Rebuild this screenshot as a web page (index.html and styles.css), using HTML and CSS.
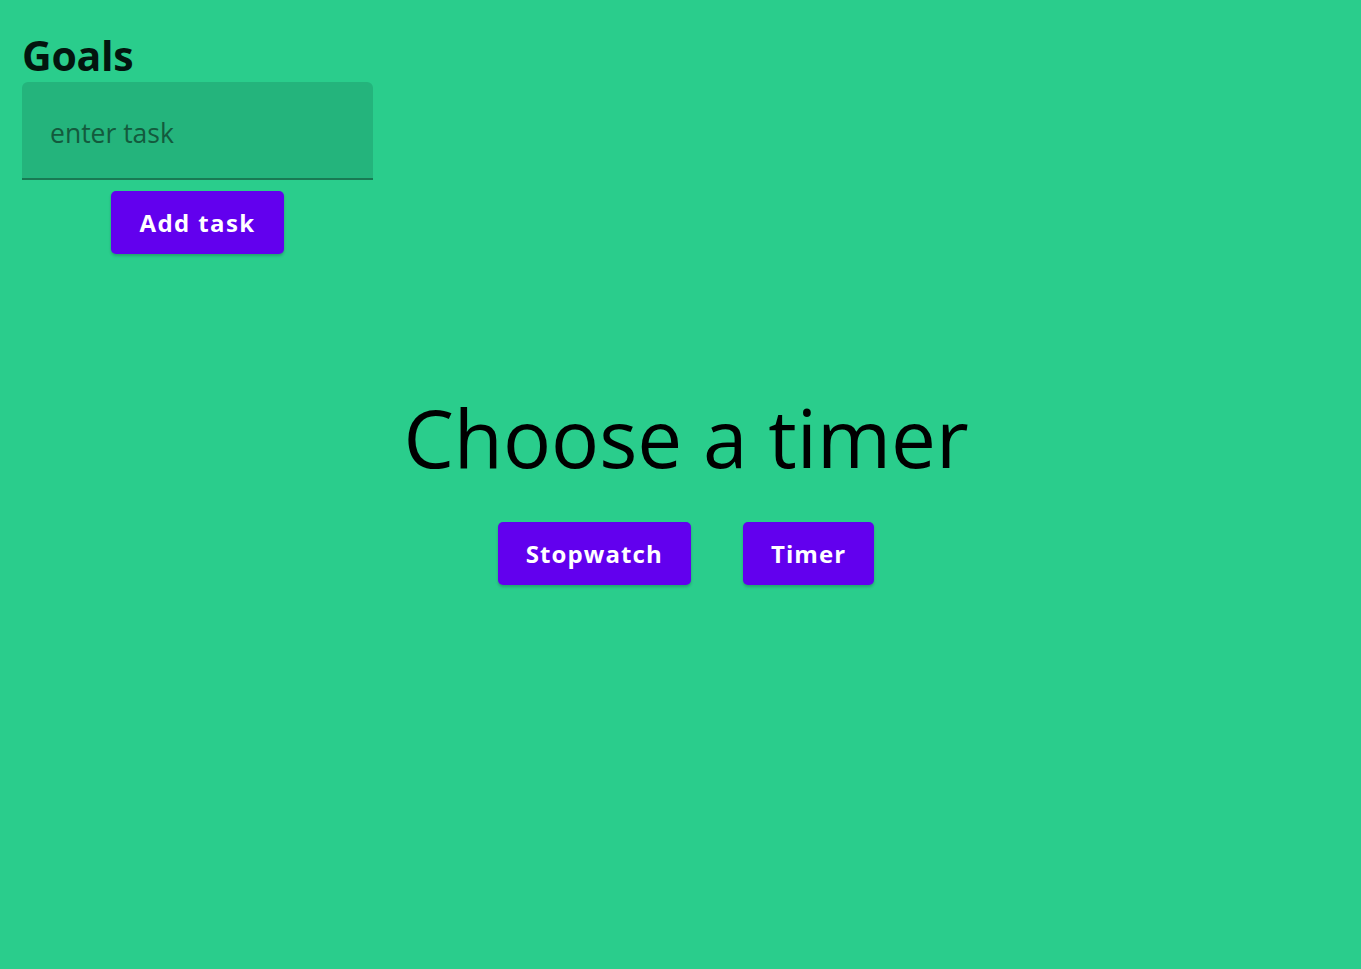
FILE: index.html
```html
<!DOCTYPE html>
<html lang="en">
<head>
<meta charset="utf-8">
<title>Goals</title>
<link rel="stylesheet" href="styles.css">
</head>
<body>
<div class="app">
  <section class="goals">
    <h2 class="goals-title">Goals</h2>
    <label class="field">
      <input class="field-input" type="text" placeholder="enter task">
    </label>
    <button class="btn btn-add">Add task</button>
  </section>
  <main class="timers">
    <h1 class="timers-title">Choose a timer</h1>
    <div class="timers-actions">
      <button class="btn">Stopwatch</button>
      <button class="btn">Timer</button>
    </div>
  </main>
</div>
</body>
</html>
```

FILE: styles.css
```css
html, body {
  margin: 0;
  height: 100%;
  background: #2acd8c;
  font-family: "Open Sans", "Noto Sans", sans-serif;
}
.app {
  padding: 0 22px;
}
.goals {
  width: 351px;
  display: flex;
  flex-direction: column;
  align-items: center;
}
.goals-title {
  align-self: flex-start;
  margin: 28px 0 0;
  font-size: 41px;
  line-height: 54px;
  font-weight: 700;
  letter-spacing: -0.3px;
  color: #03150e;
}
.field {
  align-self: stretch;
  display: block;
  background: #24b47c;
  border-radius: 6px 6px 0 0;
  border-bottom: 2px solid #187a53;
  height: 96px;
  box-sizing: content-box;
}
.field-input {
  width: 100%;
  height: 100%;
  box-sizing: border-box;
  border: 0;
  background: transparent;
  padding: 6px 28px 0;
  font-family: inherit;
  font-size: 26.5px;
  color: #0f3d2a;
  outline: none;
}
.field-input::placeholder {
  color: #135a3d;
  opacity: 1;
}
.btn {
  background: #6200ee;
  color: #fff;
  border: 0;
  border-radius: 5px;
  height: 63px;
  padding: 0 28px;
  font-family: inherit;
  font-size: 24px;
  font-weight: 700;
  letter-spacing: 1.1px;
  box-shadow: 0 2px 3px rgba(0,0,0,0.2);
  cursor: pointer;
}
.btn-add {
  margin-top: 11px;
  letter-spacing: 1.4px;
}
.timers {
  padding-left: 11px;
  text-align: center;
  margin-top: 128px;
}
.timers-title {
  margin: 0;
  font-size: 80px;
  font-weight: 400;
  line-height: 110px;
  color: #000;
}
.timers-actions {
  display: flex;
  justify-content: center;
  gap: 52px;
  margin-top: 30px;
}
```
